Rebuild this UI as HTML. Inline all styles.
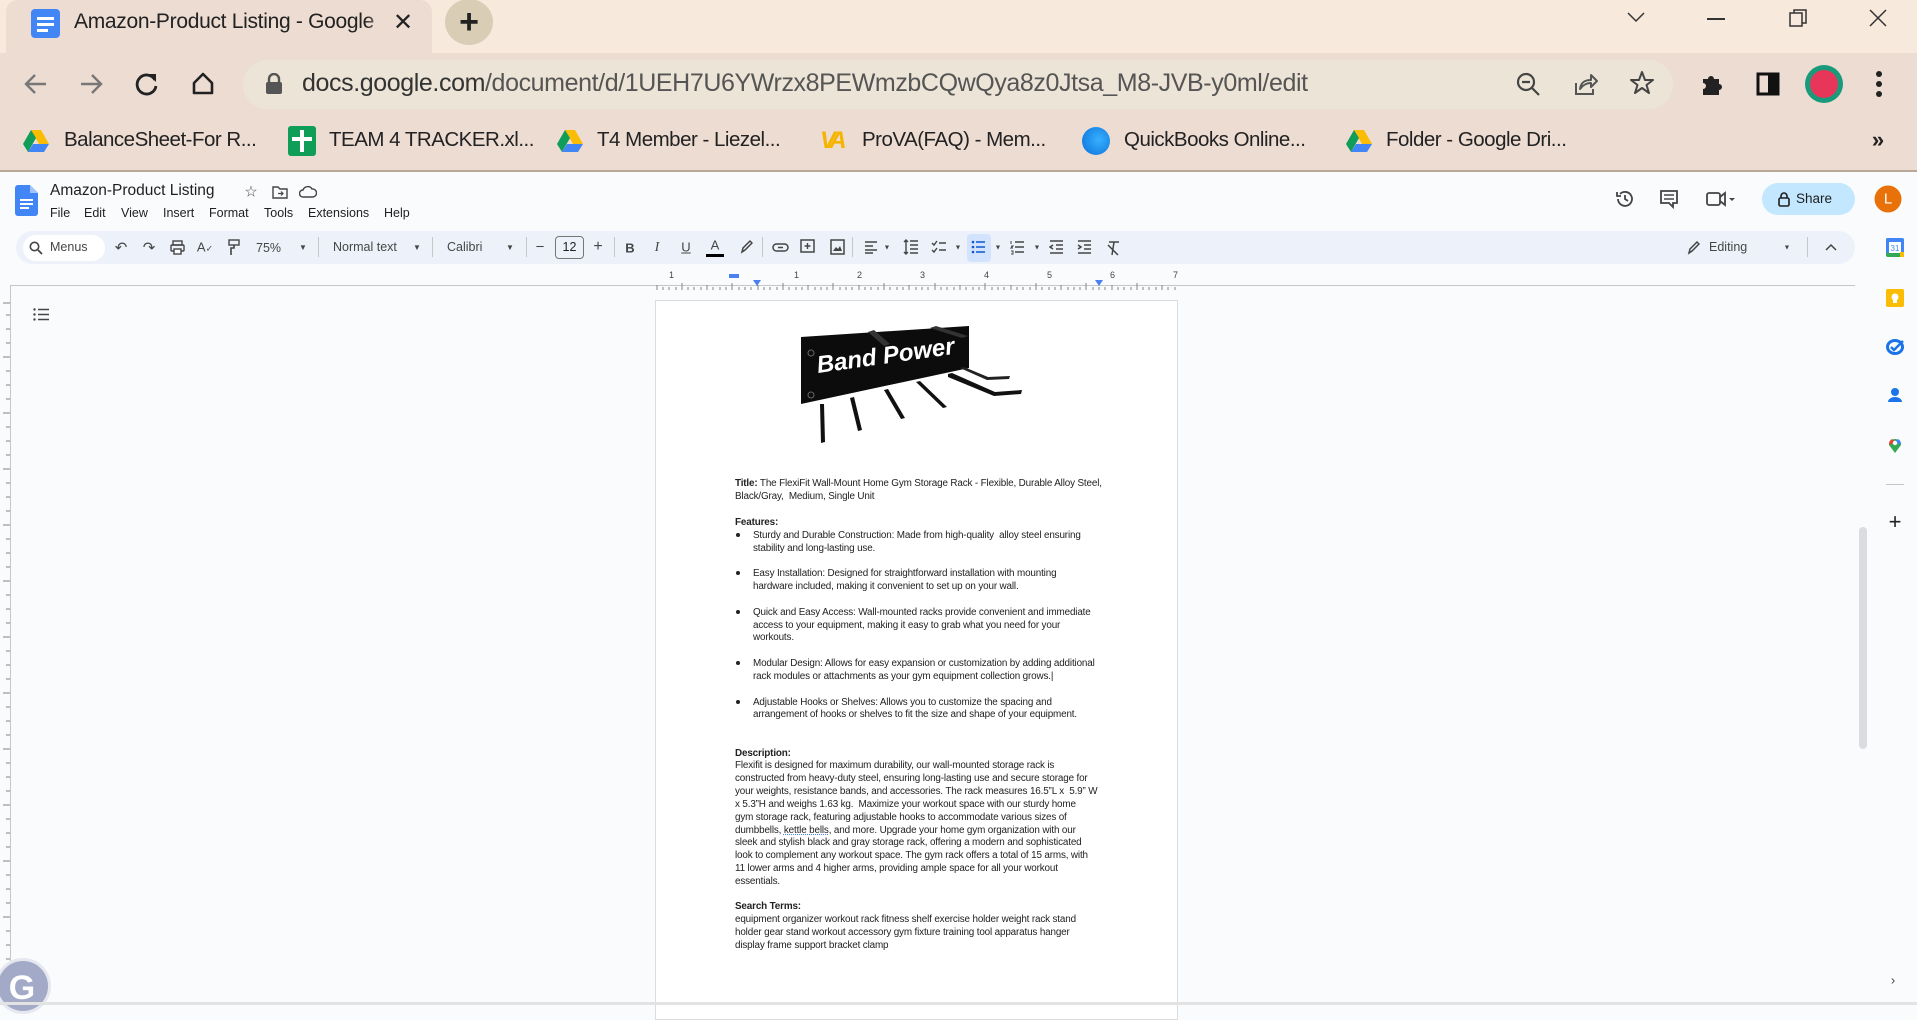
<!DOCTYPE html>
<html><head><meta charset="utf-8"><style>
*{margin:0;padding:0;box-sizing:border-box}
body{width:1917px;height:1005px;overflow:hidden;background:#f9fbfd;font-family:"Liberation Sans",sans-serif;position:relative;color:#444746}
.a{position:absolute;white-space:nowrap}
.c{position:absolute;transform:translate(-50%,-50%);white-space:nowrap;line-height:1}
.tb{font-size:13px;color:#444746}
.doc .l{position:absolute;left:735px;font-size:9.9px;letter-spacing:-0.15px;color:#222;white-space:nowrap;line-height:13px}
.doc .b{left:753px}
.dot{position:absolute;left:736px;width:4px;height:4px;border-radius:50%;background:#222}
.bm{position:absolute;top:128px;font-size:20.5px;color:#222;letter-spacing:-0.5px}
.sep{position:absolute;top:237px;width:1px;height:20px;background:#c7c7c7}
</style></head><body>
<div class="a" style="left:0;top:0;width:1917px;height:53px;background:#f7e9dc"></div>
<div class="a" style="left:6px;top:0;width:426px;height:54px;background:#eddcd2;border-radius:12px 12px 0 0"></div>
<svg class="a" style="left:31px;top:9px" width="29" height="29"><rect x="0" y="0" width="29" height="29" rx="4" fill="#4285f4"/><rect x="6" y="8" width="17" height="3" fill="#fff"/><rect x="6" y="14" width="17" height="3" fill="#fff"/><rect x="6" y="20" width="11" height="3" fill="#fff"/></svg>
<div class="a" style="left:74px;top:10px;font-size:21px;color:#222;width:312px;overflow:hidden;letter-spacing:-0.3px">Amazon-Product Listing - Google</div>
<div class="a" style="left:366px;top:5px;width:24px;height:40px;background:linear-gradient(90deg,rgba(237,220,210,0),#eddcd2)"></div>
<div class="c" style="left:403px;top:23px;font-size:24px;color:#222">✕</div>
<div class="c" style="left:469px;top:22px;width:48px;height:46px;border-radius:50%;background:#d9cdb6;transform:translate(-50%,-50%)"></div>
<div class="c" style="left:469px;top:22px;font-size:34px;color:#222;font-weight:bold">+</div>
<svg class="a" style="left:1626px;top:10px" width="20" height="14"><path d="M2 3 L10 11 L18 3" stroke="#333" stroke-width="1.5" fill="none"/></svg>
<div class="a" style="left:1707px;top:18px;width:18px;height:1.5px;background:#333"></div>
<svg class="a" style="left:1788px;top:8px" width="20" height="20"><rect x="2" y="5" width="12" height="13" stroke="#333" stroke-width="1.5" fill="none"/><path d="M6 5V2h12v13h-4" stroke="#333" stroke-width="1.5" fill="none"/></svg>
<svg class="a" style="left:1868px;top:8px" width="20" height="20"><path d="M2 2L18 18M18 2L2 18" stroke="#333" stroke-width="1.5"/></svg>
<div class="a" style="left:0;top:53px;width:1917px;height:119px;background:#eddcd2;border-bottom:2px solid #b8a898"></div>
<svg class="a" style="left:23px;top:72px" width="26" height="24"><path d="M23 12H3M12 3L3 12L12 21" stroke="#777" stroke-width="2.4" fill="none"/></svg>
<svg class="a" style="left:78px;top:72px" width="26" height="24"><path d="M3 12H23M14 3L23 12L14 21" stroke="#777" stroke-width="2.4" fill="none"/></svg>
<svg class="a" style="left:134px;top:71px" width="26" height="26"><path d="M21 9A9.5 9.5 0 1 0 22 15" stroke="#222" stroke-width="2.8" fill="none"/><path d="M14 3H22V11Z" fill="#222"/></svg>
<svg class="a" style="left:190px;top:70px" width="26" height="26"><path d="M4 13L13 4L22 13V23H4Z" stroke="#222" stroke-width="2.6" fill="none" stroke-linejoin="round"/></svg>
<div class="a" style="left:243px;top:60px;width:1430px;height:49px;border-radius:25px;background:#ece4d6"></div>
<svg class="a" style="left:265px;top:73px" width="18" height="22"><rect x="1" y="9" width="16" height="12" rx="2" fill="#555"/><path d="M4 10V6a5 5 0 0 1 10 0v4" stroke="#555" stroke-width="2.4" fill="none"/></svg>
<div class="a" style="left:302px;top:69px;font-size:25px;color:#333;letter-spacing:-0.4px">docs.google.com<span style="color:#555">/document/d/1UEH7U6YWrzx8PEWmzbCQwQya8z0Jtsa_M8-JVB-y0ml/edit</span></div>
<svg class="a" style="left:1516px;top:72px" width="26" height="26"><circle cx="10" cy="10" r="8" stroke="#444" stroke-width="2.2" fill="none"/><path d="M6 10H14M16 16L23 23" stroke="#444" stroke-width="2.2"/></svg>
<svg class="a" style="left:1573px;top:71px" width="26" height="26"><path d="M3 12V23H20V18" stroke="#555" stroke-width="2" fill="none"/><path d="M7 18C8 11 12 9 18 9V4L24 10L18 16V12C13 12 10 14 7 18Z" stroke="#555" stroke-width="2" fill="none" stroke-linejoin="round"/></svg>
<svg class="a" style="left:1629px;top:70px" width="26" height="26"><path d="M13 2L16 10H24L17.5 15L20 23L13 18L6 23L8.5 15L2 10H10Z" stroke="#444" stroke-width="2" fill="none" stroke-linejoin="round"/></svg>
<svg class="a" style="left:1700px;top:71px" width="26" height="26"><path d="M3 8H8A3 3 0 0 1 14 8H19V13A3 3 0 0 1 19 19V24H3V18A3 3 0 0 0 3 12Z" fill="#222"/></svg>
<svg class="a" style="left:1756px;top:72px" width="24" height="24"><rect x="2" y="2" width="20" height="20" stroke="#111" stroke-width="3" fill="none"/><rect x="12" y="2" width="10" height="20" fill="#111"/></svg>
<div class="c" style="left:1824px;top:84px;width:38px;height:38px;border-radius:50%;background:#1a9a7a;transform:translate(-50%,-50%)"></div>
<div class="c" style="left:1824px;top:84px;width:28px;height:28px;border-radius:50%;background:#e8355a;transform:translate(-50%,-50%)"></div>
<svg class="a" style="left:1873px;top:70px" width="12" height="28"><circle cx="6" cy="4" r="3" fill="#222"/><circle cx="6" cy="14" r="3" fill="#222"/><circle cx="6" cy="24" r="3" fill="#222"/></svg>
<svg class="a" style="left:23px;top:129px" width="26" height="24"><path d="M8 1H18L26 15H16Z" fill="#fbbc04"/><path d="M8 1L0 15L5 23L13 9Z" fill="#0f9d58"/><path d="M5 23H21L26 15H10Z" fill="#4285f4"/></svg>
<div class="bm" style="left:64px">BalanceSheet-For R...</div>
<svg class="a" style="left:288px;top:126px" width="28" height="30"><rect width="28" height="30" rx="3" fill="#0f9d58"/><rect x="12" y="4" width="4" height="22" fill="#fff"/><rect x="4" y="11" width="20" height="4" fill="#fff"/></svg>
<div class="bm" style="left:329px">TEAM 4 TRACKER.xl...</div>
<svg class="a" style="left:557px;top:129px" width="26" height="24"><path d="M8 1H18L26 15H16Z" fill="#fbbc04"/><path d="M8 1L0 15L5 23L13 9Z" fill="#0f9d58"/><path d="M5 23H21L26 15H10Z" fill="#4285f4"/></svg>
<div class="bm" style="left:597px">T4 Member - Liezel...</div>
<div class="a" style="left:820px;top:127px;font-size:24px;font-weight:bold;color:#f5b400;font-style:italic;letter-spacing:-5px">VA</div>
<div class="bm" style="left:862px">ProVA(FAQ) - Mem...</div>
<div class="a" style="left:1082px;top:127px;width:28px;height:28px;border-radius:50%;background:radial-gradient(circle at 60% 45%,#37b0ff,#0a6fd8)"></div>
<div class="bm" style="left:1124px">QuickBooks Online...</div>
<svg class="a" style="left:1346px;top:129px" width="26" height="24"><path d="M8 1H18L26 15H16Z" fill="#fbbc04"/><path d="M8 1L0 15L5 23L13 9Z" fill="#0f9d58"/><path d="M5 23H21L26 15H10Z" fill="#4285f4"/></svg>
<div class="bm" style="left:1386px">Folder - Google Dri...</div>
<div class="c" style="left:1878px;top:140px;font-size:22px;color:#222;font-weight:bold">»</div>
<svg class="a" style="left:15px;top:185px" width="23" height="31"><path d="M0 3a3 3 0 0 1 3-3H15L23 8V28a3 3 0 0 1-3 3H3a3 3 0 0 1-3-3Z" fill="#4285f4"/><path d="M15 0V8H23Z" fill="#a1c2fa"/><rect x="5" y="14" width="13" height="2" fill="#fff"/><rect x="5" y="18" width="13" height="2" fill="#fff"/><rect x="5" y="22" width="9" height="2" fill="#fff"/></svg>
<div class="a" style="left:50px;top:182px;font-size:15.5px;color:#1f1f1f">Amazon-Product Listing</div>
<div class="c" style="left:251px;top:192px;font-size:15px;color:#444">☆</div>
<svg class="a" style="left:272px;top:185px" width="16" height="14"><path d="M1 2H6L8 4H15V13H1Z" stroke="#444" stroke-width="1.4" fill="none"/><path d="M6 8.5H11M9 6.5L11 8.5L9 10.5" stroke="#444" stroke-width="1.2" fill="none"/></svg>
<svg class="a" style="left:299px;top:185px" width="18" height="14"><path d="M4 12A3.5 3.5 0 0 1 4 5A5 5 0 0 1 13 4A4 4 0 0 1 14 12Z" stroke="#444" stroke-width="1.4" fill="none"/></svg>
<div class="a" style="left:50px;top:206px;font-size:12.5px;color:#1f1f1f"><span style="position:absolute;left:0">File</span><span style="position:absolute;left:34px">Edit</span><span style="position:absolute;left:71px">View</span><span style="position:absolute;left:113px">Insert</span><span style="position:absolute;left:159px">Format</span><span style="position:absolute;left:214px">Tools</span><span style="position:absolute;left:258px">Extensions</span><span style="position:absolute;left:334px">Help</span></div>
<svg class="a" style="left:1615px;top:189px" width="20" height="20"><path d="M3 10A7 7 0 1 0 5 5" stroke="#444" stroke-width="1.8" fill="none"/><path d="M2 3V7H6" stroke="#444" stroke-width="1.8" fill="none"/><path d="M10 6V10L13 12" stroke="#444" stroke-width="1.8" fill="none"/></svg>
<svg class="a" style="left:1659px;top:189px" width="20" height="20"><path d="M2 2H18V14H14V18L10 14H2Z" stroke="#444" stroke-width="1.8" fill="none"/><path d="M5 6H15M5 10H15" stroke="#444" stroke-width="1.5"/></svg>
<svg class="a" style="left:1706px;top:190px" width="30" height="18"><rect x="1" y="3" width="13" height="12" rx="2" stroke="#444" stroke-width="1.8" fill="none"/><path d="M14 7L19 3V15L14 11" stroke="#444" stroke-width="1.8" fill="none"/><path d="M23 8L29 8L26 11Z" fill="#444"/></svg>
<div class="a" style="left:1762px;top:183px;width:93px;height:32px;border-radius:16px;background:#c2e7ff"></div>
<svg class="a" style="left:1778px;top:191px" width="12" height="16"><rect x="1" y="7" width="10" height="8" rx="1.5" stroke="#1f1f1f" stroke-width="1.6" fill="none"/><path d="M3 7V5a3 3 0 0 1 6 0v2" stroke="#1f1f1f" stroke-width="1.6" fill="none"/></svg>
<div class="a" style="left:1796px;top:191px;font-size:13.5px;color:#1f1f1f">Share</div>
<div class="c" style="left:1888px;top:199px;width:27px;height:27px;border-radius:50%;background:#e8710a;transform:translate(-50%,-50%)"></div>
<div class="c" style="left:1888px;top:199px;font-size:15px;color:#fff">L</div>
<div class="a" style="left:16px;top:231px;width:1839px;height:33px;border-radius:17px;background:#edf2fa"></div>
<div class="a" style="left:23px;top:235px;width:82px;height:26px;border-radius:13px;background:#fff"></div>
<svg class="a" style="left:29px;top:241px" width="14" height="14"><circle cx="5.5" cy="5.5" r="4.2" stroke="#444" stroke-width="1.6" fill="none"/><path d="M9 9L13 13" stroke="#444" stroke-width="1.8"/></svg>
<div class="a tb" style="left:50px;top:240px;font-size:12.5px">Menus</div>
<div class="c tb" style="left:121px;top:248px;font-size:15px">↶</div>
<div class="c tb" style="left:149px;top:248px;font-size:15px">↷</div>
<svg class="a" style="left:170px;top:240px" width="15" height="15"><rect x="3" y="1" width="9" height="4" stroke="#444" stroke-width="1.4" fill="none"/><rect x="1" y="5" width="13" height="6" rx="1" stroke="#444" stroke-width="1.4" fill="none"/><rect x="4" y="9" width="7" height="5" fill="#fff" stroke="#444" stroke-width="1.4"/></svg>
<div class="c tb" style="left:205px;top:247px;font-size:13px">A<span style="font-size:9px">✓</span></div>
<svg class="a" style="left:228px;top:239px" width="12" height="17"><rect x="1" y="1" width="10" height="5" stroke="#444" stroke-width="1.4" fill="none"/><path d="M6 6V9H3V16" stroke="#444" stroke-width="1.6" fill="none"/></svg>
<div class="a tb" style="left:256px;top:241px;font-size:12.5px">75%</div>
<div class="c tb" style="left:303px;top:248px;font-size:8px">▼</div>
<div class="sep" style="left:318px"></div>
<div class="a tb" style="left:333px;top:240px;font-size:12.5px">Normal text</div>
<div class="c tb" style="left:417px;top:248px;font-size:8px">▼</div>
<div class="sep" style="left:432px"></div>
<div class="a tb" style="left:447px;top:240px;font-size:12.5px">Calibri</div>
<div class="c tb" style="left:510px;top:248px;font-size:8px">▼</div>
<div class="sep" style="left:526px"></div>
<div class="c tb" style="left:540px;top:247px;font-size:15px">−</div>
<div class="a" style="left:555px;top:236px;width:29px;height:23px;border:1px solid #747775;border-radius:4px;font-size:12.5px;text-align:center;line-height:21px;color:#1f1f1f">12</div>
<div class="c tb" style="left:598px;top:247px;font-size:16px">+</div>
<div class="sep" style="left:614px"></div>
<div class="c tb" style="left:630px;top:248px;font-size:13px;font-weight:bold">B</div>
<div class="c tb" style="left:657px;top:248px;font-size:14px;font-style:italic;font-family:'Liberation Serif',serif">I</div>
<div class="c tb" style="left:686px;top:247px;font-size:13px;text-decoration:underline">U</div>
<div class="c tb" style="left:715px;top:245px;font-size:13px">A</div>
<div class="a" style="left:706px;top:254px;width:18px;height:3px;background:#000"></div>
<svg class="a" style="left:739px;top:239px" width="14" height="16"><path d="M3 13L4 9L11 2L13 4L6 11Z" stroke="#444" stroke-width="1.5" fill="none"/></svg>
<div class="sep" style="left:762px"></div>
<svg class="a" style="left:772px;top:242px" width="17" height="11"><rect x="1" y="2" width="15" height="7" rx="3.5" stroke="#444" stroke-width="1.5" fill="none"/><path d="M6 5.5H11" stroke="#444" stroke-width="1.5"/></svg>
<svg class="a" style="left:800px;top:239px" width="16" height="16"><rect x="1" y="1" width="13" height="12" stroke="#444" stroke-width="1.5" fill="none"/><path d="M7.5 4V10M4.5 7H10.5" stroke="#444" stroke-width="1.4"/></svg>
<svg class="a" style="left:830px;top:239px" width="15" height="16"><rect x="1" y="1" width="13" height="14" stroke="#444" stroke-width="1.5" fill="none"/><path d="M3 12L6 8L8 10L10 7L12 12Z" fill="#444"/></svg>
<div class="sep" style="left:852px"></div>
<svg class="a" style="left:864px;top:240px" width="14" height="14"><path d="M1 2H13M1 6H9M1 10H13M1 13H9" stroke="#444" stroke-width="1.5"/></svg>
<div class="c tb" style="left:887px;top:248px;font-size:7px">▼</div>
<svg class="a" style="left:903px;top:239px" width="16" height="16"><path d="M7 2H15M7 6H15M7 10H15M7 14H15M3 1V15M1 3L3 1L5 3M1 13L3 15L5 13" stroke="#444" stroke-width="1.4" fill="none"/></svg>
<svg class="a" style="left:931px;top:239px" width="16" height="16"><path d="M1 4L3 6L6 2M1 11L3 13L6 9M8 4H15M8 11H15" stroke="#444" stroke-width="1.4" fill="none"/></svg>
<div class="c tb" style="left:958px;top:248px;font-size:7px">▼</div>
<div class="a" style="left:967px;top:234px;width:24px;height:28px;border-radius:4px;background:#d3e3fd"></div>
<svg class="a" style="left:971px;top:240px" width="15" height="15"><path d="M5 2H14M5 7H14M5 12H14" stroke="#0b57d0" stroke-width="1.6"/><circle cx="2" cy="2" r="1.3" fill="#0b57d0"/><circle cx="2" cy="7" r="1.3" fill="#0b57d0"/><circle cx="2" cy="12" r="1.3" fill="#0b57d0"/></svg>
<div class="c tb" style="left:998px;top:248px;font-size:7px">▼</div>
<svg class="a" style="left:1010px;top:240px" width="15" height="15"><path d="M5 2H14M5 7H14M5 12H14" stroke="#444" stroke-width="1.5"/><path d="M1 1V4M1 6H3L1 8H3M1 11H3V14H1" stroke="#444" stroke-width="1" fill="none"/></svg>
<div class="c tb" style="left:1037px;top:248px;font-size:7px">▼</div>
<svg class="a" style="left:1049px;top:240px" width="15" height="15"><path d="M1 1H14M7 5H14M7 9H14M1 13H14M4 5L1 7L4 9" stroke="#444" stroke-width="1.5" fill="none"/></svg>
<svg class="a" style="left:1077px;top:240px" width="15" height="15"><path d="M1 1H14M7 5H14M7 9H14M1 13H14M1 5L4 7L1 9" stroke="#444" stroke-width="1.5" fill="none"/></svg>
<svg class="a" style="left:1106px;top:240px" width="15" height="16"><path d="M3 2H13M8 2L6 15M2 5L12 15" stroke="#444" stroke-width="1.5" fill="none"/></svg>
<svg class="a" style="left:1687px;top:240px" width="13" height="15"><path d="M2 13L3 9L10 2L12 4L5 11Z" stroke="#444" stroke-width="1.5" fill="none"/></svg>
<div class="a tb" style="left:1709px;top:240px;font-size:12.5px">Editing</div>
<div class="c tb" style="left:1787px;top:248px;font-size:7px">▼</div>
<div class="sep" style="left:1807px"></div>
<svg class="a" style="left:1825px;top:243px" width="12" height="8"><path d="M1 7L6 2L11 7" stroke="#444" stroke-width="1.5" fill="none"/></svg>
<div class="a" style="left:10px;top:285px;width:1845px;height:1px;background:#c4c7c5"></div>
<svg class="a" style="left:655px;top:268px" width="525" height="22">
<g stroke="#80868b" stroke-width="1">
<path d="M2 22V17M8 22V19M14 22V19M21 22V19M27 22V15M33 22V19M39 22V19M46 22V19M52 22V17M58 22V19M65 22V19M71 22V19M77 22V15M84 22V19M90 22V19M96 22V19M103 22V17M109 22V19M115 22V19M122 22V19M128 22V15M134 22V19M141 22V19M147 22V19M153 22V17M160 22V19M166 22V19M172 22V19M178 22V15M185 22V19M191 22V19M197 22V19M204 22V17M210 22V19M216 22V19M223 22V19M229 22V15M235 22V19M242 22V19M248 22V19M254 22V17M261 22V19M267 22V19M273 22V19M280 22V15M286 22V19M292 22V19M299 22V19M305 22V17M311 22V19M318 22V19M324 22V19M330 22V15M337 22V19M343 22V19M349 22V19M356 22V17M362 22V19M368 22V19M375 22V19M381 22V15M387 22V19M394 22V19M400 22V19M406 22V17M413 22V19M419 22V19M425 22V19M431 22V15M438 22V19M444 22V19M450 22V19M457 22V17M463 22V19M469 22V19M476 22V19M482 22V15M488 22V19M494 22V19M501 22V19M507 22V17M513 22V19M520 22V19"/>
</g>
<g font-size="9" fill="#444" font-family="Liberation Sans"><text x="14" y="10">1</text><text x="139" y="10">1</text><text x="202" y="10">2</text><text x="265" y="10">3</text><text x="329" y="10">4</text><text x="392" y="10">5</text><text x="455" y="10">6</text><text x="518" y="10">7</text></g>
<rect x="74" y="6" width="10" height="4" fill="#4a80f0"/><path d="M98 12L106 12L102 18Z" fill="#4a80f0"/><path d="M440 12L448 12L444 18Z" fill="#4a80f0"/>
</svg>
<div class="a" style="left:10px;top:285px;width:1px;height:700px;background:#c4c7c5"></div>
<svg class="a" style="left:0;top:285px" width="10" height="700"><g stroke="#80868b"><path d="M3 18H10M6 30H10M6 44H10M6 58H10M3 72H10M6 86H10M6 100H10M6 114H10M3 128H10M6 142H10M6 156H10M6 170H10M3 184H10M6 198H10M6 212H10M6 226H10M3 240H10M6 254H10M6 268H10M6 282H10M3 296H10M6 310H10M6 324H10M6 338H10M3 352H10M6 366H10M6 380H10M6 394H10M3 408H10M6 422H10M6 436H10M6 450H10M3 464H10M6 478H10M6 492H10M6 506H10M3 520H10M6 534H10M6 548H10M6 562H10M3 576H10M6 590H10M6 604H10M6 618H10M3 632H10M6 646H10M6 660H10M6 674H10M3 688H10"/></g></svg>
<svg class="a" style="left:33px;top:308px" width="17" height="13"><path d="M5 1.5H16M5 6.5H16M5 11.5H16" stroke="#444" stroke-width="1.6"/><circle cx="1.5" cy="1.5" r="1.2" fill="#444"/><circle cx="1.5" cy="6.5" r="1.2" fill="#444"/><circle cx="1.5" cy="11.5" r="1.2" fill="#444"/></svg>
<div class="a" style="left:655px;top:300px;width:523px;height:720px;background:#fff;border:1px solid #dadce0"></div>
<svg class="a" style="left:790px;top:320px" width="240" height="130">
<path d="M11 17L179 6L179 48L11 84Z" fill="#0c0c0c"/>
<path d="M78 12L84 10L100 24L94 26Z M140 8L146 6L178 16L172 18Z" fill="#333"/>
<path d="M30 84L34 84L35 122L31 123Z" fill="#111"/>
<path d="M60 78L64 77L72 110L68 111Z" fill="#111"/>
<path d="M94 70L98 69L115 98L111 99Z" fill="#111"/>
<path d="M126 62L130 61L157 87L153 88Z" fill="#111"/>
<path d="M158 54L162 53L205 72L232 70L231 74L204 76L158 57Z" fill="#111"/>
<path d="M170 48L174 47L198 57L220 56L219 59L197 60Z" fill="#222"/>
<circle cx="21" cy="33" r="3" fill="none" stroke="#666"/><circle cx="21" cy="75" r="3" fill="none" stroke="#666"/>
<text x="28" y="53" font-family="Liberation Sans" font-weight="bold" font-style="italic" font-size="24" fill="#fff" transform="rotate(-8 28 53)">Band Power</text>
</svg>
<div class="doc">
<div class="l" style="top:477px"><b>Title:</b> The FlexiFit Wall-Mount Home Gym Storage Rack - Flexible, Durable Alloy Steel,</div>
<div class="l" style="top:490px">Black/Gray,&nbsp; Medium, Single Unit</div>
<div class="l" style="top:516px"><b>Features:</b></div>
<div class="dot" style="top:533px"></div><div class="l b" style="top:529px">Sturdy and Durable Construction: Made from high-quality&nbsp; alloy steel ensuring</div>
<div class="l b" style="top:542px">stability and long-lasting use.</div>
<div class="dot" style="top:571px"></div><div class="l b" style="top:567px">Easy Installation: Designed for straightforward installation with mounting</div>
<div class="l b" style="top:580px">hardware included, making it convenient to set up on your wall.</div>
<div class="dot" style="top:610px"></div><div class="l b" style="top:606px">Quick and Easy Access: Wall-mounted racks provide convenient and immediate</div>
<div class="l b" style="top:619px">access to your equipment, making it easy to grab what you need for your</div>
<div class="l b" style="top:631px">workouts.</div>
<div class="dot" style="top:661px"></div><div class="l b" style="top:657px">Modular Design: Allows for easy expansion or customization by adding additional</div>
<div class="l b" style="top:670px">rack modules or attachments as your gym equipment collection grows.|</div>
<div class="dot" style="top:700px"></div><div class="l b" style="top:696px">Adjustable Hooks or Shelves: Allows you to customize the spacing and</div>
<div class="l b" style="top:708px">arrangement of hooks or shelves to fit the size and shape of your equipment.</div>
<div class="l" style="top:747px"><b>Description:</b></div>
<div class="l" style="top:759px">Flexifit is designed for maximum durability, our wall-mounted storage rack is</div>
<div class="l" style="top:772px">constructed from heavy-duty steel, ensuring long-lasting use and secure storage for</div>
<div class="l" style="top:785px">your weights, resistance bands, and accessories. The rack measures 16.5”L x&nbsp; 5.9” W</div>
<div class="l" style="top:798px">x 5.3”H and weighs 1.63 kg.&nbsp; Maximize your workout space with our sturdy home</div>
<div class="l" style="top:811px">gym storage rack, featuring adjustable hooks to accommodate various sizes of</div>
<div class="l" style="top:824px">dumbbells, <span style="text-decoration:underline dotted #4285f4">kettle bells</span>, and more. Upgrade your home gym organization with our</div>
<div class="l" style="top:836px">sleek and stylish black and gray storage rack, offering a modern and sophisticated</div>
<div class="l" style="top:849px">look to complement any workout space. The gym rack offers a total of 15 arms, with</div>
<div class="l" style="top:862px">11 lower arms and 4 higher arms, providing ample space for all your workout</div>
<div class="l" style="top:875px">essentials.</div>
<div class="l" style="top:900px"><b>Search Terms:</b></div>
<div class="l" style="top:913px">equipment organizer workout rack fitness shelf exercise holder weight rack stand</div>
<div class="l" style="top:926px">holder gear stand workout accessory gym fixture training tool apparatus hanger</div>
<div class="l" style="top:939px">display frame support bracket clamp</div>
</div>
<div class="a" style="left:1859px;top:527px;width:8px;height:222px;border-radius:4px;background:#dadce0"></div>
<svg class="a" style="left:1886px;top:238px" width="18" height="19"><rect x="0" y="0" width="18" height="19" rx="2" fill="#34a853"/><rect x="0" y="0" width="18" height="15" rx="2" fill="#4285f4"/><rect x="3" y="4" width="12" height="11" fill="#fff"/><rect x="14" y="14" width="4" height="5" fill="#fbbc04"/><text x="9" y="13" font-size="8" text-anchor="middle" fill="#4285f4" font-family="Liberation Sans">31</text></svg>
<svg class="a" style="left:1886px;top:289px" width="18" height="18"><rect width="18" height="18" rx="2" fill="#fbbc04"/><circle cx="9" cy="8" r="3.5" fill="#fff"/><rect x="7" y="11" width="4" height="3" fill="#fff"/></svg>
<svg class="a" style="left:1886px;top:338px" width="18" height="17"><ellipse cx="9" cy="9" rx="7.5" ry="6.5" stroke="#1a73e8" stroke-width="3" fill="none"/><path d="M5 9L8 12L17 3" stroke="#1a73e8" stroke-width="2.4" fill="none"/></svg>
<svg class="a" style="left:1887px;top:387px" width="16" height="16"><circle cx="8" cy="5" r="4" fill="#1a73e8"/><path d="M1 15a7 5 0 0 1 14 0Z" fill="#1a73e8"/></svg>
<svg class="a" style="left:1887px;top:436px" width="16" height="18"><path d="M8 17L2 9A6 6 0 1 1 14 9Z" fill="#34a853"/><path d="M2 9A6 6 0 0 1 5 3L8 6Z" fill="#ea4335"/><path d="M14 9A6 6 0 0 0 11 3L8 6Z" fill="#4285f4"/><circle cx="8" cy="7" r="2.2" fill="#fff"/></svg>
<div class="a" style="left:1886px;top:484px;width:18px;height:1px;background:#c4c7c5"></div>
<div class="c" style="left:1895px;top:522px;font-size:22px;color:#222">+</div>
<div class="c" style="left:1893px;top:980px;font-size:13px;color:#444">›</div>
<div class="a" style="left:-5px;top:958px;width:56px;height:56px;border-radius:50%;background:#a3aac8;border:3px solid #e6e8f0"></div>
<div class="c" style="left:22px;top:988px;font-size:34px;color:#fff;font-weight:bold">G</div>
<div class="a" style="left:0;top:1002px;width:1917px;height:3px;background:#e3e3e3"></div>
</body></html>
